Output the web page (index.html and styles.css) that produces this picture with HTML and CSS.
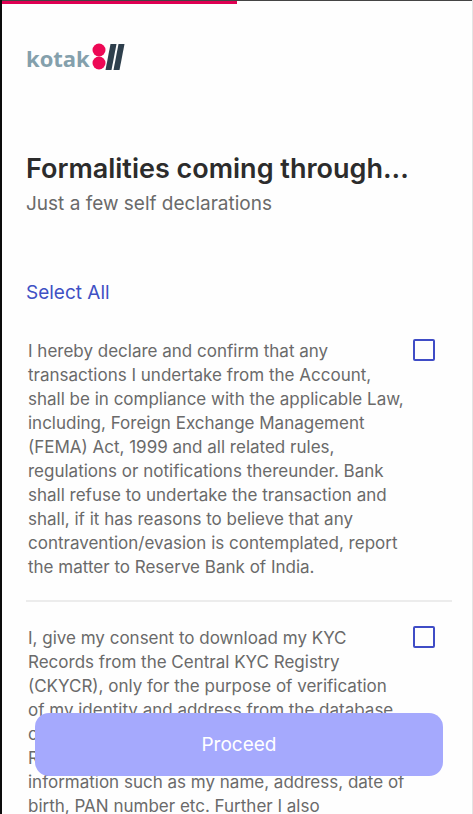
FILE: index.html
```html
<!DOCTYPE html>
<html lang="en">
<head>
    <meta charset="UTF-8">
    <meta name="viewport" content="width=device-width, initial-scale=1.0">
    <title>Kotak 811 - Self Declarations</title>
    <link rel="stylesheet" href="styles.css">
</head>
<body>
    <div class="screen">
        <div class="progress"><div class="progress-bar"></div></div>
        <header class="logo">
            <span class="logo-name">kotak</span>
            <svg class="logo-mark" width="33" height="28" viewBox="0 0 33 28" aria-hidden="true">
                <circle cx="7" cy="7" r="6.5" fill="#ed0855"/>
                <circle cx="7" cy="20" r="6.5" fill="#ed0855"/>
                <path d="M18.5 1h6l-5 26h-6z" fill="#2e3f4c"/>
                <path d="M26.5 1h6l-5 26h-6z" fill="#2e3f4c"/>
            </svg>
        </header>
        <main>
            <h1>Formalities coming through...</h1>
            <p class="subtitle">Just a few self declarations</p>
            <button type="button" class="select-all" onclick="selectAll()">Select All</button>
            <div class="declaration">
                <label for="fema">I hereby declare and confirm that any<br>
                    transactions I undertake from the Account,<br>
                    shall be in compliance with the applicable Law,<br>
                    including, Foreign Exchange Management<br>
                    (FEMA) Act, 1999 and all related rules,<br>
                    regulations or notifications thereunder. Bank<br>
                    shall refuse to undertake the transaction and<br>
                    shall, if it has reasons to believe that any<br>
                    contravention/evasion is contemplated, report<br>
                    the matter to Reserve Bank of India.</label>
                <input type="checkbox" id="fema">
            </div>
            <div class="declaration">
                <label for="kyc">I, give my consent to download my KYC<br>
                    Records from the Central KYC Registry<br>
                    (CKYCR), only for the purpose of verification<br>
                    of my identity and address from the database<br>
                    of CKYCR Registry. I understand that my KYC<br>
                    Record includes my KYC Records/Personal<br>
                    information such as my name, address, date of<br>
                    birth, PAN number etc. Further I also</label>
                <input type="checkbox" id="kyc">
            </div>
        </main>
    </div>
    <div class="footer">
        <button type="button" class="proceed">Proceed</button>
    </div>

    <script>
        function selectAll() {
            document.querySelectorAll('.declaration input').forEach(function (box) {
                box.checked = true;
            });
        }
    </script>
</body>
</html>
```
FILE: styles.css
```css
* {
    box-sizing: border-box;
}
body {
    margin: 0;
    font-family: Inter, Roboto, sans-serif;
    color: #6a6a6a;
    background: #fefefe;
}
.screen {
    height: 100vh;
    overflow-y: auto;
    scrollbar-width: none;
    border-left: 2px solid #0c0c0c;
    border-right: 1px solid #e4e4e4;
}
.progress {
    border-top: 1px solid #444;
}
.progress-bar {
    width: 50%;
    height: 3px;
    background: #df0052;
}
.logo {
    display: flex;
    align-items: flex-end;
    gap: 2px;
    padding: 39px 24px 0;
}
.logo-name {
    font-family: "Open Sans", sans-serif;
    font-size: 22px;
    line-height: 26px;
    font-weight: 700;
    color: #84a0ac;
}
main {
    padding: 81px 20px 0 24px;
}
h1 {
    margin: 0;
    font-size: 27px;
    line-height: 34px;
    font-weight: 600;
    color: #2c2c2c;
}
.subtitle {
    margin: 4px 0 61px;
    font-size: 19px;
    line-height: 28px;
}
.select-all {
    display: block;
    padding: 0;
    border: none;
    background: none;
    font-family: inherit;
    font-size: 19px;
    line-height: 28px;
    color: #3f51c4;
    cursor: pointer;
}
.declaration {
    display: flex;
    justify-content: space-between;
    align-items: flex-start;
    padding: 24px 17px 21px 2px;
    font-size: 17px;
    line-height: 24px;
    white-space: nowrap;
}
.select-all + .declaration {
    padding-top: 32px;
}
.declaration + .declaration {
    border-top: 2px solid #ececec;
}
.declaration input {
    appearance: none;
    flex: none;
    width: 22px;
    height: 22px;
    margin: 0;
    border: 2px solid #3f4cc6;
    border-radius: 2px;
}
.declaration input:checked {
    background: #3f4cc6;
}
.footer {
    position: fixed;
    left: 0;
    right: 0;
    bottom: 38px;
    padding: 0 30px 0 35px;
}
.proceed {
    width: 100%;
    padding: 17px;
    border: none;
    border-radius: 14px;
    background: #a5a9fd;
    font-family: inherit;
    font-size: 19px;
    line-height: 29px;
    color: #fff;
    cursor: pointer;
}
```
